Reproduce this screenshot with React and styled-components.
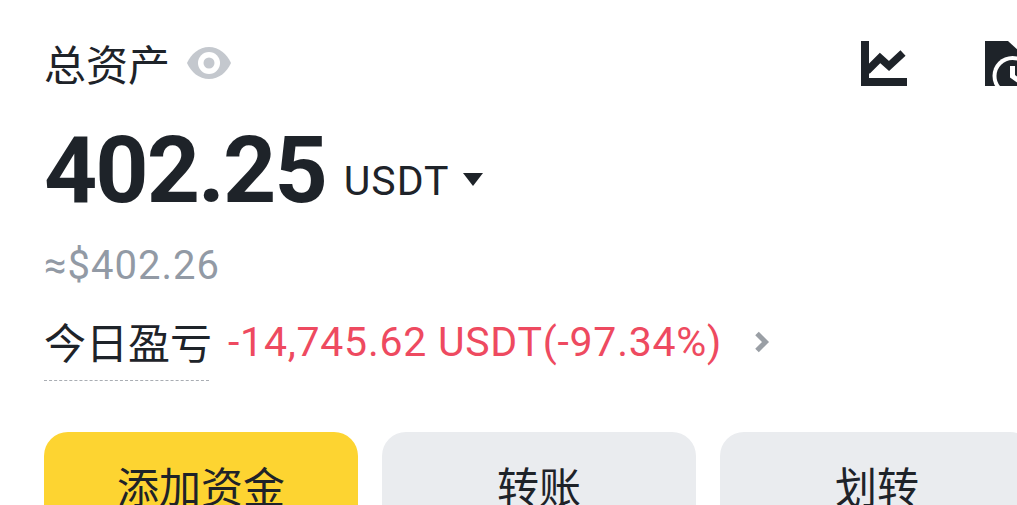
import styled, { createGlobalStyle } from 'styled-components'

const GlobalStyle = createGlobalStyle`
  html, body {
    margin: 0;
    height: 100%;
    overflow: hidden;
    background: #fff;
  }
`;

const Page = styled.div`
  width: 1079px;
  height: 505px;
  box-sizing: border-box;
  padding: 40px 48px 0 44px;
  font-family: 'Noto Sans CJK SC', 'Noto Sans', sans-serif;
  color: #1e2329;
`;

const Header = styled.div`
  display: flex;
  align-items: center;
  height: 46px;
`;

const Label = styled.span`
  font-size: 42px;
  line-height: 48px;
  white-space: nowrap;
`;

const EyeButton = styled.svg`
  width: 44px;
  height: 32px;
  margin-left: 17px;
`;

const HeaderIcons = styled.div`
  display: flex;
  gap: 78px;
  margin-left: auto;
`;

const HeaderIcon = styled.svg`
  width: 46px;
  height: 45px;
  display: block;
  fill: #1e2329;
`;

const BalanceRow = styled.div`
  display: flex;
  align-items: flex-end;
  margin-top: 43px;
  font-family: Roboto, sans-serif;
`;

const Balance = styled.span`
  font-size: 93px;
  line-height: 84px;
  font-weight: 700;
  letter-spacing: -2px;
`;

const Unit = styled.span`
  font-size: 41px;
  line-height: 48px;
  margin: 0 0 8px 18px;
  letter-spacing: 1px;
`;

const Caret = styled.span`
  width: 0;
  height: 0;
  margin: 0 0 27px 13px;
  border-left: 10px solid transparent;
  border-right: 10px solid transparent;
  border-top: 13px solid #1e2329;
`;

const Approx = styled.div`
  margin-top: 30px;
  font-family: Roboto, sans-serif;
  font-size: 40px;
  line-height: 46px;
  letter-spacing: 1px;
  color: #929aa5;
`;

const PnlRow = styled.div`
  display: flex;
  align-items: center;
  margin-top: 29px;
  height: 48px;
`;

const PnlLabel = styled(Label)`
  position: relative;
  padding-bottom: 2px;

  &::after {
    content: '';
    position: absolute;
    left: 0;
    right: 3px;
    bottom: -14px;
    border-bottom: 1px dashed #a9adb3;
  }
`;

const PnlValue = styled.span`
  margin-left: 16px;
  font-family: Roboto, sans-serif;
  font-size: 41px;
  letter-spacing: 0.75px;
  color: #ee4a60;
  white-space: nowrap;
`;

const Chevron = styled.svg`
  width: 18px;
  height: 24px;
  margin-left: 31px;
`;

const Actions = styled.div`
  display: grid;
  grid-template-columns: repeat(3, 314px);
  gap: 24px;
  margin-top: 66px;
`;

const Action = styled.button`
  height: 110px;
  border: 0;
  border-radius: 24px;
  padding: 0 0 4px;
  background: ${props => (props.$primary ? '#fdd431' : '#eaecef')};
  color: #1e2329;
  font-family: inherit;
  font-size: 42px;
  line-height: 106px;
`;

export default function App() {
  return (
    <>
      <GlobalStyle />
      <Page>
        <Header>
          <Label>总资产</Label>
          <EyeButton viewBox="0 0 44 32">
            <path d="M22 0C32 0 40 7 44 16C40 25 32 32 22 32C12 32 4 25 0 16C4 7 12 0 22 0Z" fill="#c4c8ce" />
            <circle cx="22" cy="16" r="11" fill="#fff" />
            <circle cx="22" cy="16" r="5.5" fill="#c4c8ce" />
          </EyeButton>
          <HeaderIcons>
            <HeaderIcon viewBox="0 0 46 45">
              <path d="M0 0h8v37h38v8H0z" />
              <path d="M6 30L19 17L28 25L42 12" fill="none" stroke="#1e2329" strokeWidth="7.5" />
            </HeaderIcon>
            <HeaderIcon viewBox="0 0 46 45">
              <path d="M0 0h23l23 21v24H0z" />
              <circle cx="27.5" cy="35" r="20" fill="#fff" />
              <circle cx="27.5" cy="35" r="16" />
              <path d="M25 25h5v9l7 5-3 4-9-6.500z" fill="#fff" />
            </HeaderIcon>
          </HeaderIcons>
        </Header>
        <BalanceRow>
          <Balance>402.25</Balance>
          <Unit>USDT</Unit>
          <Caret />
        </BalanceRow>
        <Approx>≈$402.26</Approx>
        <PnlRow>
          <PnlLabel>今日盈亏</PnlLabel>
          <PnlValue>-14,745.62 USDT(-97.34%)</PnlValue>
          <Chevron viewBox="0 0 18 24">
            <path d="M4 3.500L12.500 12L4 20.500" fill="none" stroke="#9a9fa5" strokeWidth="5" />
          </Chevron>
        </PnlRow>
        <Actions>
          <Action $primary>添加资金</Action>
          <Action>转账</Action>
          <Action>划转</Action>
        </Actions>
      </Page>
    </>
  )
}
